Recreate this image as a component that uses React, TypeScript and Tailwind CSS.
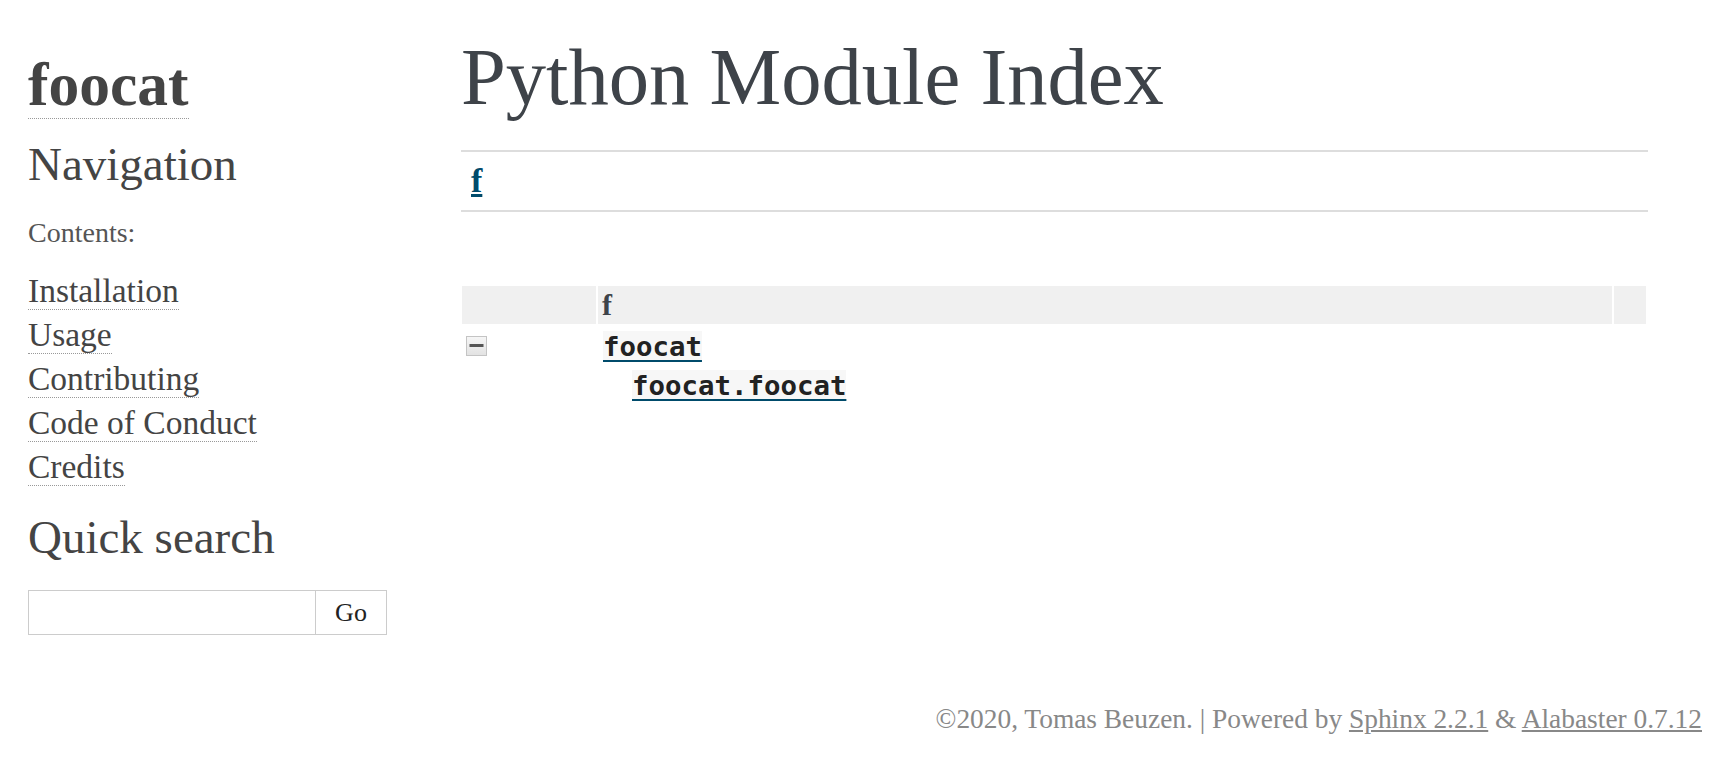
import React from "react";

const links = ["Installation", "Usage", "Contributing", "Code of Conduct", "Credits"];

function CollapseIcon() {
  return (
    <svg width="21" height="20" viewBox="0 0 21 20">
      <defs>
        <linearGradient id="cg" x1="0" y1="0" x2="0" y2="1">
          <stop offset="0" stopColor="#f6f6f6" />
          <stop offset="1" stopColor="#e2e2e2" />
        </linearGradient>
      </defs>
      <rect x="0.5" y="0.5" width="20" height="19" fill="url(#cg)" stroke="#c4c4c4" />
      <rect x="3.5" y="8" width="14" height="3" fill="#555" />
    </svg>
  );
}

export default function App() {
  return (
    <div className="w-[1732px] h-[772px] overflow-hidden bg-white font-['Liberation_Serif',serif] text-[#3e4349]">
      <div className="flex pl-[28px]">
        <aside className="w-[359px] shrink-0 pt-[54px] text-[#444]">
          <div className="h-[60px] text-[61.5px] leading-[60px] font-bold">
            <a className="border-b border-dotted border-[#999]">foocat</a>
          </div>
          <h3 className="mt-[27px] h-[47px] text-[47px] leading-[47px] font-normal">Navigation</h3>
          <p className="mt-[31px] h-[27px] text-[28px] leading-[27px] text-[#555]">Contents:</p>
          <ul className="mt-[23px]">
            {links.map((l) => (
              <li key={l} className="h-[44px] text-[33.5px] leading-[44px]">
                <a className="border-b border-dotted border-[#999]">{l}</a>
              </li>
            ))}
          </ul>
          <h3 className="mt-[25px] h-[47px] text-[47px] leading-[47px] font-normal">Quick search</h3>
          <div className="mt-[29px] flex h-[45px] w-[359px]">
            <input
              type="text"
              className="h-full w-[288px] border border-[#ccc] bg-white outline-none"
            />
            <button className="h-full w-[71px] border border-l-0 border-[#ccc] bg-white text-[26px] text-[#222] font-['Liberation_Serif',serif]">
              Go
            </button>
          </div>
        </aside>
        <main className="ml-[74px] w-[1187px] pt-[37px]">
          <h1 className="h-[80px] text-[80.6px] leading-[80px] font-normal">Python Module Index</h1>
          <div className="mt-[33px] h-[62px] border-y-2 border-[#ddd] pl-[10px] text-[34px] leading-[58px] font-bold">
            <a className="text-[#004B6B] underline">f</a>
          </div>
          <div className="mt-[74px] ml-[1px] flex w-[1184px] flex-col gap-[2px]">
            <div className="flex h-[38px] gap-[2px]">
              <div className="w-[134px] bg-[#f0f0f0]" />
              <div className="w-[1014px] bg-[#f0f0f0] pl-[4px] text-[30px] leading-[38px] font-bold">f</div>
              <div className="w-[32px] bg-[#f0f0f0]" />
            </div>
            <div className="flex h-[37px] gap-[2px]">
              <div className="w-[134px] pl-[4px] pt-[10px]">
                <CollapseIcon />
              </div>
              <div className="h-[37px] w-[1014px] pl-[5px] font-['DejaVu_Sans_Mono',monospace] text-[27.4px] leading-[41px] font-bold">
                <a className="text-[#004B6B] underline decoration-2 underline-offset-[4px]">
                  <code className="bg-[#f7f7f7] text-[#222] font-['DejaVu_Sans_Mono',monospace]">foocat</code>
                </a>
              </div>
            </div>
            <div className="flex h-[37px] gap-[2px]">
              <div className="w-[134px]" />
              <div className="h-[37px] w-[1014px] pl-[34px] font-['DejaVu_Sans_Mono',monospace] text-[27.4px] leading-[41px] font-bold">
                <a className="text-[#004B6B] underline decoration-2 underline-offset-[4px]">
                  <code className="bg-[#f7f7f7] text-[#222] font-['DejaVu_Sans_Mono',monospace]">foocat.foocat</code>
                </a>
              </div>
            </div>
          </div>
        </main>
      </div>
      <footer className="mt-[71px] h-[27px] pr-[30px] text-right text-[27.4px] leading-[27px] text-[#888]">
        ©2020, Tomas Beuzen. | Powered by <a className="underline">Sphinx 2.2.1</a> &amp;{" "}
        <a className="underline">Alabaster 0.7.12</a>
      </footer>
    </div>
  );
}
